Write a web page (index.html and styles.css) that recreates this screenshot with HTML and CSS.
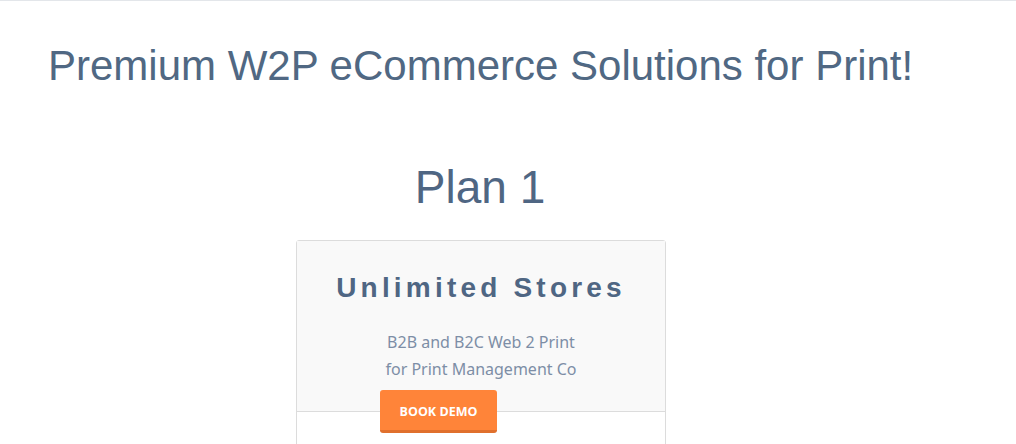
FILE: index.html
```html
<!DOCTYPE html>
<html>
<head>
<meta charset="utf-8">
<link rel="stylesheet" href="styles.css">
</head>
<body>
<div class="topline"></div>
<h1 class="title">Premium W2P eCommerce Solutions for Print!</h1>
<h2 class="plan">Plan 1</h2>
<div class="card">
  <div class="card-head">
    <h3 class="card-title">Unlimited Stores</h3>
    <p class="card-sub">B2B and B2C Web 2 Print<br>for Print Management Co</p>
  </div>
  <div class="card-action">
    <a class="btn">BOOK DEMO</a>
  </div>
</div>
</body>
</html>
```
FILE: styles.css
```css
html, body {
  margin: 0;
  padding: 0;
  background: #fff;
  overflow: hidden;
}
body {
  font-family: "Liberation Sans", Arial, sans-serif;
  color: #4f6683;
}
.topline {
  height: 1px;
  background: #e3e6ea;
}
.title {
  margin: 0;
  padding: 41px 0 0 48px;
  font-weight: normal;
  font-size: 42px;
  line-height: 48px;
  color: #506883;
}
.plan {
  margin: 72px 0 0;
  text-align: center;
  font-weight: normal;
  font-size: 46px;
  line-height: 50px;
  color: #4f6683;
  padding-right: 56px;
}
.card {
  width: 368px;
  margin: 28px 0 0 296px;
  border: 1px solid #dcdcdc;
  border-radius: 3px;
  background: #fff;
  height: 300px;
}
.card-head {
  background: #f9f9f9;
  border-bottom: 1px solid #dcdcdc;
  padding: 30px 0 0;
  height: 140px;
  text-align: center;
}
.card-title {
  margin: 0;
  font-size: 28px;
  line-height: 34px;
  font-weight: bold;
  letter-spacing: 4.2px;
  color: #4f6683;
}
.card-sub {
  margin: 24px 0 0;
  font-family: "Noto Sans", "Open Sans", sans-serif;
  font-size: 16px;
  line-height: 27px;
  color: #7d8ea6;
}
.card-action {
  margin-top: -22px;
  padding-left: 83px;
}
.btn {
  display: inline-block;
  width: 117px;
  height: 40px;
  line-height: 43px;
  background: #ff8439;
  border-bottom: 3px solid #e0702d;
  border-radius: 3px;
  color: #fff;
  text-align: center;
  font-family: "Open Sans", sans-serif;
  font-weight: bold;
  font-size: 12.5px;
}
```
